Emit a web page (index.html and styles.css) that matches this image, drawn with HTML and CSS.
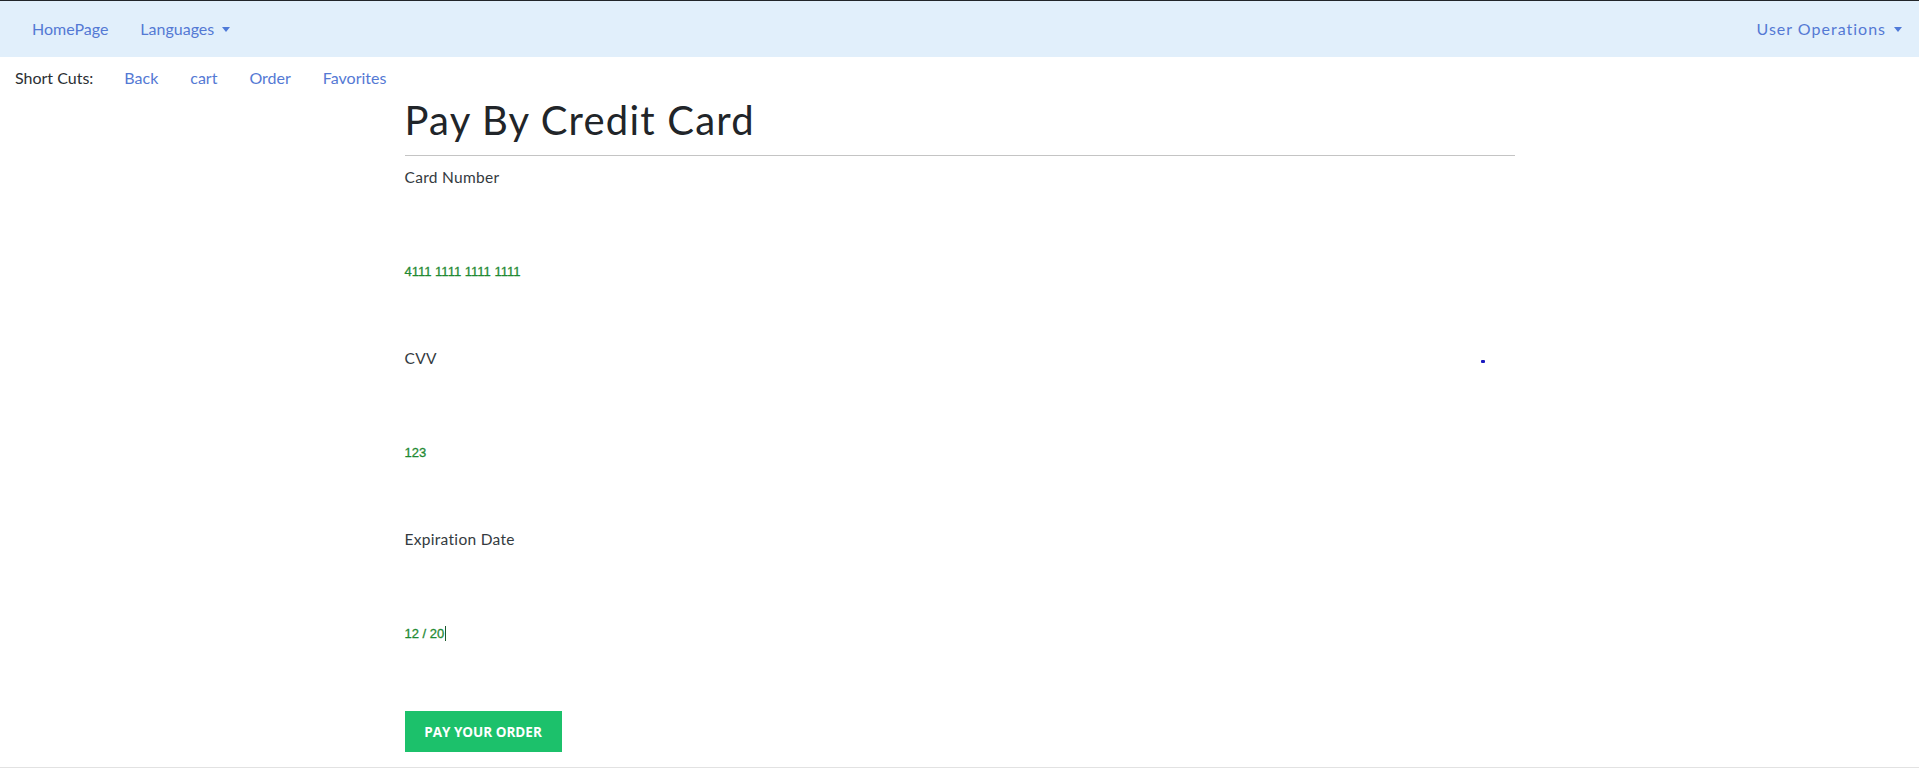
FILE: index.html
```html
<!DOCTYPE html>
<html lang="en">
<head>
<meta charset="utf-8">
<title>Pay By Credit Card</title>
<link rel="stylesheet" href="styles.css">
</head>
<body>
<div class="topline"></div>
<nav class="navbar">
  <ul class="nav-left">
    <li><a class="nav-link" href="#">HomePage</a></li>
    <li><a class="nav-link dropdown" href="#">Languages<span class="caret"></span></a></li>
  </ul>
  <ul class="nav-right">
    <li><a class="nav-link dropdown" href="#">User Operations<span class="caret"></span></a></li>
  </ul>
</nav>
<div class="shortcuts">
  <span class="sc-label">Short Cuts:</span>
  <a class="sc-link" href="#">Back</a>
  <a class="sc-link" href="#">cart</a>
  <a class="sc-link" href="#">Order</a>
  <a class="sc-link" href="#">Favorites</a>
</div>
<main class="container">
  <h1 class="title">Pay By Credit Card</h1>
  <form class="pay-form">
    <div class="field">
      <label class="field-label">Card Number</label>
      <div class="card-input">4111 1111 1111 1111</div>
    </div>
    <div class="field">
      <label class="field-label">CVV</label>
      <div class="card-input">123</div>
      <span class="stray-dot"></span>
    </div>
    <div class="field last">
      <label class="field-label">Expiration Date</label>
      <div class="card-input">12 / 20<span class="cursor"></span></div>
    </div>
    <button class="pay-btn" type="button">Pay your order</button>
  </form>
</main>
<footer class="footer"></footer>
</body>
</html>
```
FILE: styles.css
```css
* { box-sizing: border-box; }
html, body { margin: 0; padding: 0; }
body {
  font-family: "Lato", "Open Sans", sans-serif;
  font-size: 16px;
  line-height: 24px;
  color: #212529;
  background: #fff;
}
a { text-decoration: none; }
.topline { height: 1px; background: #212529; }
.navbar {
  display: flex;
  justify-content: space-between;
  align-items: center;
  background: #e1effb;
  padding: 8px 0;
  height: 56px;
}
.nav-left, .nav-right {
  list-style: none;
  margin: 0;
  padding: 0 0 0 16px;
  display: flex;
}
.nav-right { padding: 0 1px 0 0; }
.nav-link {
  display: block;
  padding: 8px 16px;
  color: #5479d4;
  line-height: 24px;
}
.nav-right .nav-link { letter-spacing: 1px; }
.caret {
  display: inline-block;
  margin-left: 8px;
  vertical-align: 3px;
  border-top: 5px solid #4f7ad8;
  border-left: 4.5px solid transparent;
  border-right: 4.5px solid transparent;
}
.shortcuts {
  display: flex;
  align-items: center;
  padding: 9px 0 6px 15px;
  height: 39px;
}
.sc-label { color: #2b2f33; padding-right: 15px; }
.sc-link { color: #5479d4; padding: 0 16px; }
.container {
  width: 1110px;
  margin: 0 auto;
  position: relative;
}
.title {
  margin: 0;
  font-size: 40px;
  line-height: 48px;
  font-weight: 400;
  letter-spacing: 1.2px;
  color: #212529;
  padding-bottom: 11px;
  border-bottom: 1px solid #c4c4c4;
}
.pay-form { padding-top: 9px; position: relative; }
.field { height: 181px; position: relative; }
.field.last { height: 184px; }
.field-label { display: block; color: #343a40; font-size: 15.5px; letter-spacing: 0.3px; }
.card-input {
  margin-top: 73px;
  font-family: "Liberation Sans", Arial, sans-serif;
  font-size: 13px;
  line-height: 20px;
  color: #1f8a33;
  font-weight: 400;
  -webkit-text-stroke: 0.3px #1f8a33;
}
.cursor {
  display: inline-block;
  width: 1px;
  height: 15px;
  background: #1a5a2a;
  vertical-align: -3px;
  margin-left: 1px;
}
.stray-dot {
  position: absolute;
  left: 1076px;
  top: 14px;
  width: 4px;
  height: 3px;
  border-radius: 1px;
  background: #1a1ac0;
}
.pay-btn {
  display: block;
  width: 157px;
  height: 41px;
  border: 0;
  border-radius: 0;
  background: #1cc16b;
  color: #fff;
  font-family: "Open Sans", sans-serif;
  font-weight: 700;
  font-size: 13.5px;
  text-transform: uppercase;
  padding: 0;
}
.footer {
  margin-top: 15px;
  border-top: 1px solid #e2e2e2;
  height: 4px;
}
```
